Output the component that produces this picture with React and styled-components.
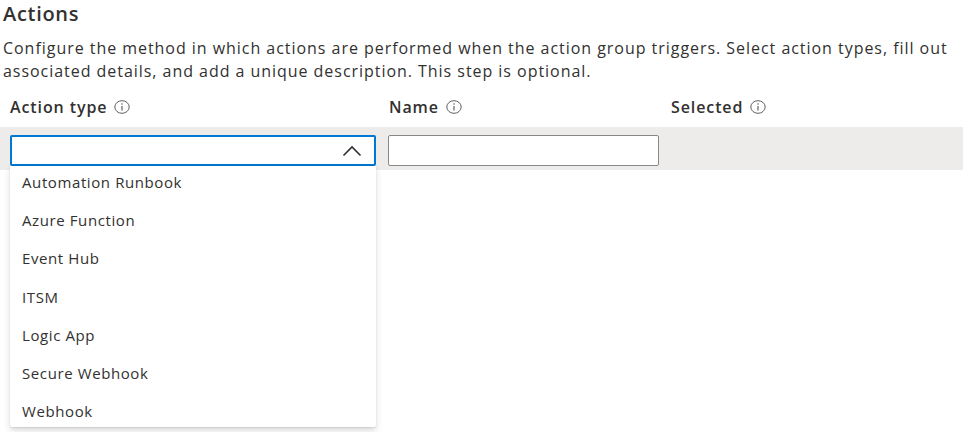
import styled, {createGlobalStyle} from 'styled-components';

const GlobalStyle = createGlobalStyle`
  body {
    margin: 0;
    background: #ffffff;
    font-family: "Open Sans", "Noto Sans", Arial, sans-serif;
    color: #323130;
  }
`;

const Page = styled.div`
  width: 970px;
  height: 432px;
  overflow: hidden;
`;

const Heading = styled.h2`
  margin: 0;
  padding: 0 0 0 3px;
  font-size: 20px;
  font-weight: 600;
  letter-spacing: 0.7px;
  line-height: 28px;
`;

const Description = styled.p`
  margin: 9px 0 0;
  padding-left: 3px;
  font-size: 16px;
  letter-spacing: 0.96px;
  line-height: 23px;
  white-space: nowrap;
`;

const HeaderRow = styled.div`
  display: grid;
  grid-template-columns: 379px 282px 1fr;
  padding: 8px 0 0 10px;
  height: 40px;
  box-sizing: border-box;
`;

const HeaderCell = styled.div`
  display: flex;
  align-items: center;
  gap: 7px;
  font-size: 16px;
  font-weight: 600;
  letter-spacing: 0.9px;
  line-height: 22px;
`;

const InfoIcon = () => (
  <svg width="16" height="14" viewBox="0 0 16 14" fill="none">
    <ellipse cx="8" cy="7" rx="7.2" ry="6.3" stroke="#605e5c" strokeWidth="1"/>
    <line x1="8" y1="6" x2="8" y2="10.4" stroke="#605e5c" strokeWidth="1.2"/>
    <circle cx="8" cy="4" r="0.8" fill="#605e5c"/>
  </svg>
);

const Band = styled.div`
  margin-top: 4px;
  width: 963px;
  height: 43px;
  background: #edecea;
  display: flex;
  align-items: flex-start;
  gap: 12px;
  padding: 8px 0 0 10px;
  box-sizing: border-box;
`;

const Dropdown = styled.div`
  position: relative;
  width: 366px;
  height: 31px;
  box-sizing: border-box;
  border: 2px solid #0078d4;
  border-radius: 2px;
  background: #ffffff;
  display: flex;
  align-items: center;
  justify-content: flex-end;
  padding-right: 12px;
`;

const TextBox = styled.div`
  width: 271px;
  height: 31px;
  box-sizing: border-box;
  border: 1px solid #8a8886;
  border-radius: 2px;
  background: #ffffff;
`;

const Menu = styled.ul`
  position: absolute;
  top: 29px;
  left: -2px;
  width: 366px;
  height: 261px;
  overflow: hidden;
  margin: 0;
  padding: 0;
  list-style: none;
  background: #ffffff;
  box-shadow: 0 3.2px 7.2px rgba(0, 0, 0, 0.13), 0 0.6px 1.8px rgba(0, 0, 0, 0.11);
  border-radius: 0 0 2px 2px;
  z-index: 2;
`;

const MenuItem = styled.li`
  height: 38.17px;
  box-sizing: border-box;
  display: flex;
  align-items: center;
  padding: 0 0 6px 12px;
  font-size: 15px;
  letter-spacing: 0.6px;
  color: #323130;
`;

const options = [
  'Automation Runbook',
  'Azure Function',
  'Event Hub',
  'ITSM',
  'Logic App',
  'Secure Webhook',
  'Webhook',
];

export default function App() {
  return (
    <Page>
      <GlobalStyle/>
      <Heading>Actions</Heading>
      <Description>
        Configure the method in which actions are performed when the action group triggers. Select action types, fill out
        <br/>
        associated details, and add a unique description. This step is optional.
      </Description>
      <HeaderRow>
        <HeaderCell>Action type <InfoIcon/></HeaderCell>
        <HeaderCell>Name <InfoIcon/></HeaderCell>
        <HeaderCell>Selected <InfoIcon/></HeaderCell>
      </HeaderRow>
      <Band>
        <Dropdown>
          <svg width="20" height="12" viewBox="0 0 20 12" fill="none">
            <path d="M1.5 10.5 L10 2 L18.5 10.5" stroke="#323130" strokeWidth="1.6"/>
          </svg>
          <Menu>
            {options.map((o) => (
              <MenuItem key={o}>{o}</MenuItem>
            ))}
          </Menu>
        </Dropdown>
        <TextBox/>
      </Band>
    </Page>
  );
}
